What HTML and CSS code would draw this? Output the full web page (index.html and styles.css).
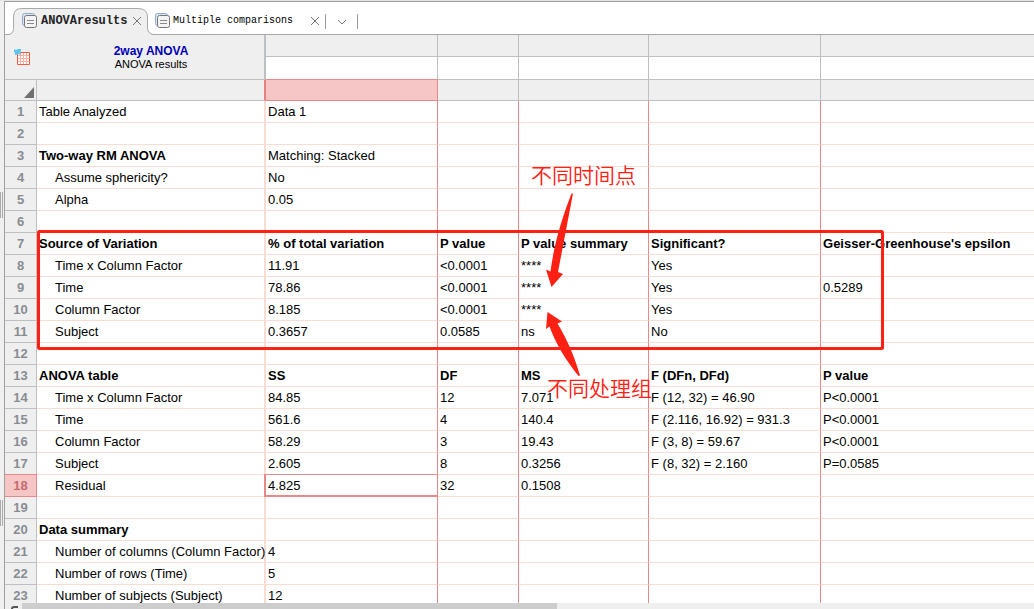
FILE: index.html
```html
<!DOCTYPE html>
<html lang="en">
<head>
<meta charset="utf-8">
<title>2way ANOVA</title>
<link rel="stylesheet" href="styles.css">
</head>
<body>
<div class="app">
  <div class="gutter"><span class="grip"></span><span class="grip"></span></div>
  <main class="pane">
    <nav class="tabs">
      <div class="tab tab-active">
        <svg class="tab-shape" width="146" height="27" viewBox="0 0 146 27" aria-hidden="true"><path class="tab-fill" d="M0 27C5 26 5 23 5 19V9Q5 .5 14 .5H130Q139.500 .5 139.500 9V19C139.500 23 141 26 146 27Z"/><path class="tab-line" d="M0 26.500C5 26 5.500 23 5.500 19V9Q5.500 .5 14 .5H130Q139.500 .5 139.500 9V19C139.500 23 141 26 146 26.500"/></svg>
        <svg class="sheet-icon" width="16" height="16" viewBox="0 0 16 16" aria-hidden="true"><rect class="sheet-back" x=".5" y=".5" width="12" height="12" rx="2"/><rect class="sheet-front" x="2.500" y="2.500" width="12" height="12" rx="2"/><path class="sheet-lines" d="M5 7.500H12M5 10.500H12"/></svg>
        <button class="tab-name">ANOVAresults</button>
        <button class="icon-button" aria-label="Close ANOVA results"><svg width="10" height="10" viewBox="0 0 10 10"><path d="M1 1L9 9M9 1L1 9"/></svg></button>
      </div>
      <div class="tab tab-second">
        <svg class="sheet-icon" width="16" height="16" viewBox="0 0 16 16" aria-hidden="true"><rect class="sheet-back" x=".5" y=".5" width="12" height="12" rx="2"/><rect class="sheet-front" x="2.500" y="2.500" width="12" height="12" rx="2"/><path class="sheet-lines" d="M5 7.500H12M5 10.500H12"/></svg>
        <button class="tab-name">Multiple comparisons</button>
        <button class="icon-button" aria-label="Close Multiple comparisons"><svg width="10" height="10" viewBox="0 0 10 10"><path d="M1 1L9 9M9 1L1 9"/></svg></button>
      </div>
      <button class="icon-button tab-menu" aria-label="More tabs"><svg width="10" height="6" viewBox="0 0 10 6"><path d="M1 1L5 5L9 1"/></svg></button>
    </nav>
    <div class="sheet">
      <table class="grid">
        <colgroup><col class="c-num"><col class="c-label"><col class="c-a"><col class="c-b"><col class="c-c"><col class="c-d"><col></colgroup>
        <thead>
          <tr class="h-title">
            <th class="title" colspan="2" rowspan="2">
              <div class="title-row">
                <svg width="18" height="18" viewBox="0 0 18 18" aria-hidden="true"><path class="mini-fill" d="M3.500 4.500H15.500V16.500H3.500Z"/><path class="mini-grid" d="M6.500 5V16M9.500 5V16M12.500 5V16M4 7.500H15M4 10.500H15M4 13.500H15"/><path class="mini-frame" d="M3.500 4.500H15.500V16.500H3.500Z"/><path class="mini-badge" d="M0 1L2 2L4 1L7 1V3L6 4L7 7L5 6L2 7L1 7V5L0 4Z"/></svg>
                <div class="title-text"><div class="title-main">2way ANOVA</div><div class="title-sub">ANOVA results</div></div>
              </div>
            </th>
            <th></th><th></th><th></th><th></th><th></th>
          </tr>
          <tr class="h-blank"><th></th><th></th><th></th><th></th><th></th></tr>
          <tr class="h-cols"><th class="corner"><svg width="10" height="11" viewBox="0 0 10 11" aria-hidden="true"><path d="M10 0V11H0Z"/></svg></th><th class="before-active"></th><th class="active-col"></th><th></th><th></th><th></th><th></th></tr>
        </thead>
        <tbody>
          <tr><th>1</th><td>Table Analyzed</td><td>Data 1</td><td></td><td></td><td></td><td></td></tr>
          <tr><th>2</th><td></td><td></td><td></td><td></td><td></td><td></td></tr>
          <tr><th>3</th><td class="bold">Two-way RM ANOVA</td><td>Matching: Stacked</td><td></td><td></td><td></td><td></td></tr>
          <tr><th>4</th><td class="indent">Assume sphericity?</td><td>No</td><td></td><td></td><td></td><td></td></tr>
          <tr><th>5</th><td class="indent">Alpha</td><td>0.05</td><td></td><td></td><td></td><td></td></tr>
          <tr><th>6</th><td></td><td></td><td></td><td></td><td></td><td></td></tr>
          <tr class="bold"><th>7</th><td>Source of Variation</td><td>% of total variation</td><td>P value</td><td>P value summary</td><td>Significant?</td><td>Geisser-Greenhouse's epsilon</td></tr>
          <tr><th>8</th><td class="indent">Time x Column Factor</td><td>11.91</td><td>&lt;0.0001</td><td>****</td><td>Yes</td><td></td></tr>
          <tr><th>9</th><td class="indent">Time</td><td>78.86</td><td>&lt;0.0001</td><td>****</td><td>Yes</td><td>0.5289</td></tr>
          <tr><th>10</th><td class="indent">Column Factor</td><td>8.185</td><td>&lt;0.0001</td><td>****</td><td>Yes</td><td></td></tr>
          <tr><th>11</th><td class="indent">Subject</td><td>0.3657</td><td>0.0585</td><td>ns</td><td>No</td><td></td></tr>
          <tr><th>12</th><td></td><td></td><td></td><td></td><td></td><td></td></tr>
          <tr class="bold"><th>13</th><td>ANOVA table</td><td>SS</td><td>DF</td><td>MS</td><td>F (DFn, DFd)</td><td>P value</td></tr>
          <tr><th>14</th><td class="indent">Time x Column Factor</td><td>84.85</td><td>12</td><td>7.071</td><td>F (12, 32) = 46.90</td><td>P&lt;0.0001</td></tr>
          <tr><th>15</th><td class="indent">Time</td><td>561.6</td><td>4</td><td>140.4</td><td>F (2.116, 16.92) = 931.3</td><td>P&lt;0.0001</td></tr>
          <tr><th>16</th><td class="indent">Column Factor</td><td>58.29</td><td>3</td><td>19.43</td><td>F (3, 8) = 59.67</td><td>P&lt;0.0001</td></tr>
          <tr><th>17</th><td class="indent">Subject</td><td>2.605</td><td>8</td><td>0.3256</td><td>F (8, 32) = 2.160</td><td>P=0.0585</td></tr>
          <tr><th class="active-row">18</th><td class="indent">Residual</td><td class="selected">4.825</td><td>32</td><td>0.1508</td><td></td><td></td></tr>
          <tr><th>19</th><td></td><td></td><td></td><td></td><td></td><td></td></tr>
          <tr><th>20</th><td class="bold">Data summary</td><td></td><td></td><td></td><td></td><td></td></tr>
          <tr><th>21</th><td class="indent">Number of columns (Column Factor)</td><td>4</td><td></td><td></td><td></td><td></td></tr>
          <tr><th>22</th><td class="indent">Number of rows (Time)</td><td>5</td><td></td><td></td><td></td><td></td></tr>
          <tr><th>23</th><td class="indent">Number of subjects (Subject)</td><td>12</td><td></td><td></td><td></td><td></td></tr>
        </tbody>
      </table>
      <svg class="marks" aria-hidden="true"><rect x="33.500" y="196.500" width="844" height="117" rx="1"/></svg>
      <svg class="arrows" width="60" height="200" viewBox="540 185 60 200" aria-hidden="true"><path d="M571.500 193.500H573L558 272L563 274L551.500 287L546 269.500L550.500 271.500C554 244 562 218 571.500 193.500Z"/><path d="M547.500 312L562 321.500L557.500 323.500C568 341 575 358 580 375.500L578.500 376C565 359 556 344 549.500 326.500L546 329Z"/></svg>
      <span class="note note-time" lang="zh">不同时间点</span>
      <span class="note note-group" lang="zh">不同处理组</span>
    </div>
    <div class="scrollbar"><span class="scroll-arrow"></span><span class="scroll-thumb"></span></div>
  </main>
</div>
</body>
</html>
```
FILE: styles.css
```css
* { box-sizing: border-box; }
body { margin: 0; background: #fff; color: #000; font: 13px/20px "Liberation Sans", Arial, sans-serif; }
button { padding: 0; border: 0; background: none; color: inherit; font: inherit; }
svg { display: block; flex: none; }

.app { display: flex; height: 100vh; overflow: hidden; border-top: 1px solid #e4e4e4; }
.gutter { width: 5px; flex: none; background: #f0f0f0; border-right: 1px solid #a0a0a0; display: flex; flex-direction: column; padding-top: 191px; gap: 282px; }
.grip { width: 3px; height: 26px; border: solid #aaa; border-width: 0 1px; }
.pane { flex: 1; min-width: 0; display: flex; flex-direction: column; border-top: 1px solid #a0a0a0; }

.tabs { flex: none; height: 33px; display: flex; align-items: flex-end; border-bottom: 1px solid #a8a8a8; padding-left: 3px; }
.tab { position: relative; display: flex; align-items: center; height: 26px; padding-bottom: 1px; font: 10px/16px "Liberation Mono", "Courier New", monospace; }
.tab-active { width: 147px; padding-left: 14px; gap: 3px; font-size: 12px; font-weight: bold; color: #222; }
.tab-shape { position: absolute; left: 0; top: 0; }
.tab-fill { fill: #efefef; }
.tab-line { fill: none; stroke: #a8a8a8; }
.tab-active > :not(.tab-shape) { position: relative; }
.tab-second { gap: 2px; }
.tab-second .icon-button { margin-left: 15px; }
.sheet-back { fill: #d5e5fa; stroke: #9aaac4; }
.sheet-front { fill: #f4f4f4; stroke: #777; }
.sheet-lines { stroke: #888; }
.icon-button { flex: none; }
.icon-button path { fill: none; stroke: #777; }
.tab-active .icon-button { margin-left: 2px; }
.tab-menu { width: 33px; height: 15px; margin: 0 0 5px 5px; border: solid #999; border-width: 0 1px; display: flex; align-items: center; justify-content: center; }

.sheet { flex: 1; min-height: 0; position: relative; overflow: hidden; }
.grid { width: 100%; table-layout: fixed; border-collapse: separate; border-spacing: 0; }
.c-num { width: 32px; }
.c-label { width: 229px; }
.c-a, .c-d { width: 172px; }
.c-b { width: 81px; }
.c-c { width: 130px; }
.grid th, .grid td { padding: 0; text-align: left; white-space: nowrap; border: solid #bcc0c4; border-width: 0 1px 1px 0; }
.grid th:last-child, .grid td:last-child { border-right: 0; }
.h-title { height: 22px; background: #efefef; }
.h-blank { height: 23px; }
.h-cols { height: 21px; background: #efefef; }
.grid .title { border-right-width: 2px; background: #efefef; }
.title-row { display: flex; align-items: center; padding-left: 9px; }
.title-text { flex: 1; text-align: center; line-height: 13px; padding: 2px 0 0 6px; }
.title-main { color: #0000b4; font-size: 12px; }
.title-sub { font-size: 11px; font-weight: normal; }
.mini-fill { fill: #fff; }
.mini-grid { fill: none; stroke: #ffb0a2; }
.mini-frame { fill: none; stroke: #f25a44; }
.mini-badge { fill: #5cc4ee; }
.grid .corner { vertical-align: bottom; padding: 0 2px 2px 19px; }
.corner path { fill: #707070; }
.grid .before-active { border-right: 2px solid #e98080; }
.grid .active-col { background: #f6c6c6; border-color: #e98888; box-shadow: 0 -1px #e98888; }

.grid tbody tr { height: 22px; }
.grid tbody th { background: #efefef; color: #888c92; font-size: 13px; text-align: center; padding-top: 1px; }
.grid tbody td { border-color: #e98888; border-bottom-color: #f9dcd2; padding-left: 2px; font-weight: normal; }
.grid tbody td:nth-child(2) { border-right: 2px solid #f9dcd2; }
.grid tbody .bold, .grid tbody .bold td { font-weight: bold; }
.grid tbody .indent { padding-left: 18px; }
.grid tbody .active-row { background: #f6c6c6; color: #c46c72; border-color: #e98888; box-shadow: 0 -1px #e98888; }
.grid tbody .selected { border-bottom-color: #e98888; box-shadow: 0 -1px #e98888, -2px 0 #e98888, -2px -1px #e98888, inset 0 -1px #e98888; }

.marks { position: absolute; inset: 0; width: 100%; height: 100%; }
.marks rect { fill: none; stroke: #ff2014; stroke-width: 3; }
.arrows { position: absolute; left: 535px; top: 150px; fill: #ff2014; }
.note { position: absolute; color: #ff2014; font: 350 21px/24px "Noto Sans CJK SC", sans-serif; white-space: nowrap; }
.note-time { left: 526px; top: 127px; }
.note-group { left: 542px; top: 340px; }

.scrollbar { flex: none; height: 6px; background: #efefef; display: flex; }
.scroll-arrow { width: 17px; }
.scroll-arrow::before { content: ""; display: block; width: 5px; height: 3px; margin: 3px 0 0 6px; border: solid #555; border-width: 2px 0 0 2px; border-radius: 3px 0 0; }
.scroll-thumb { width: 52%; background: #cdcdcd; }
```
